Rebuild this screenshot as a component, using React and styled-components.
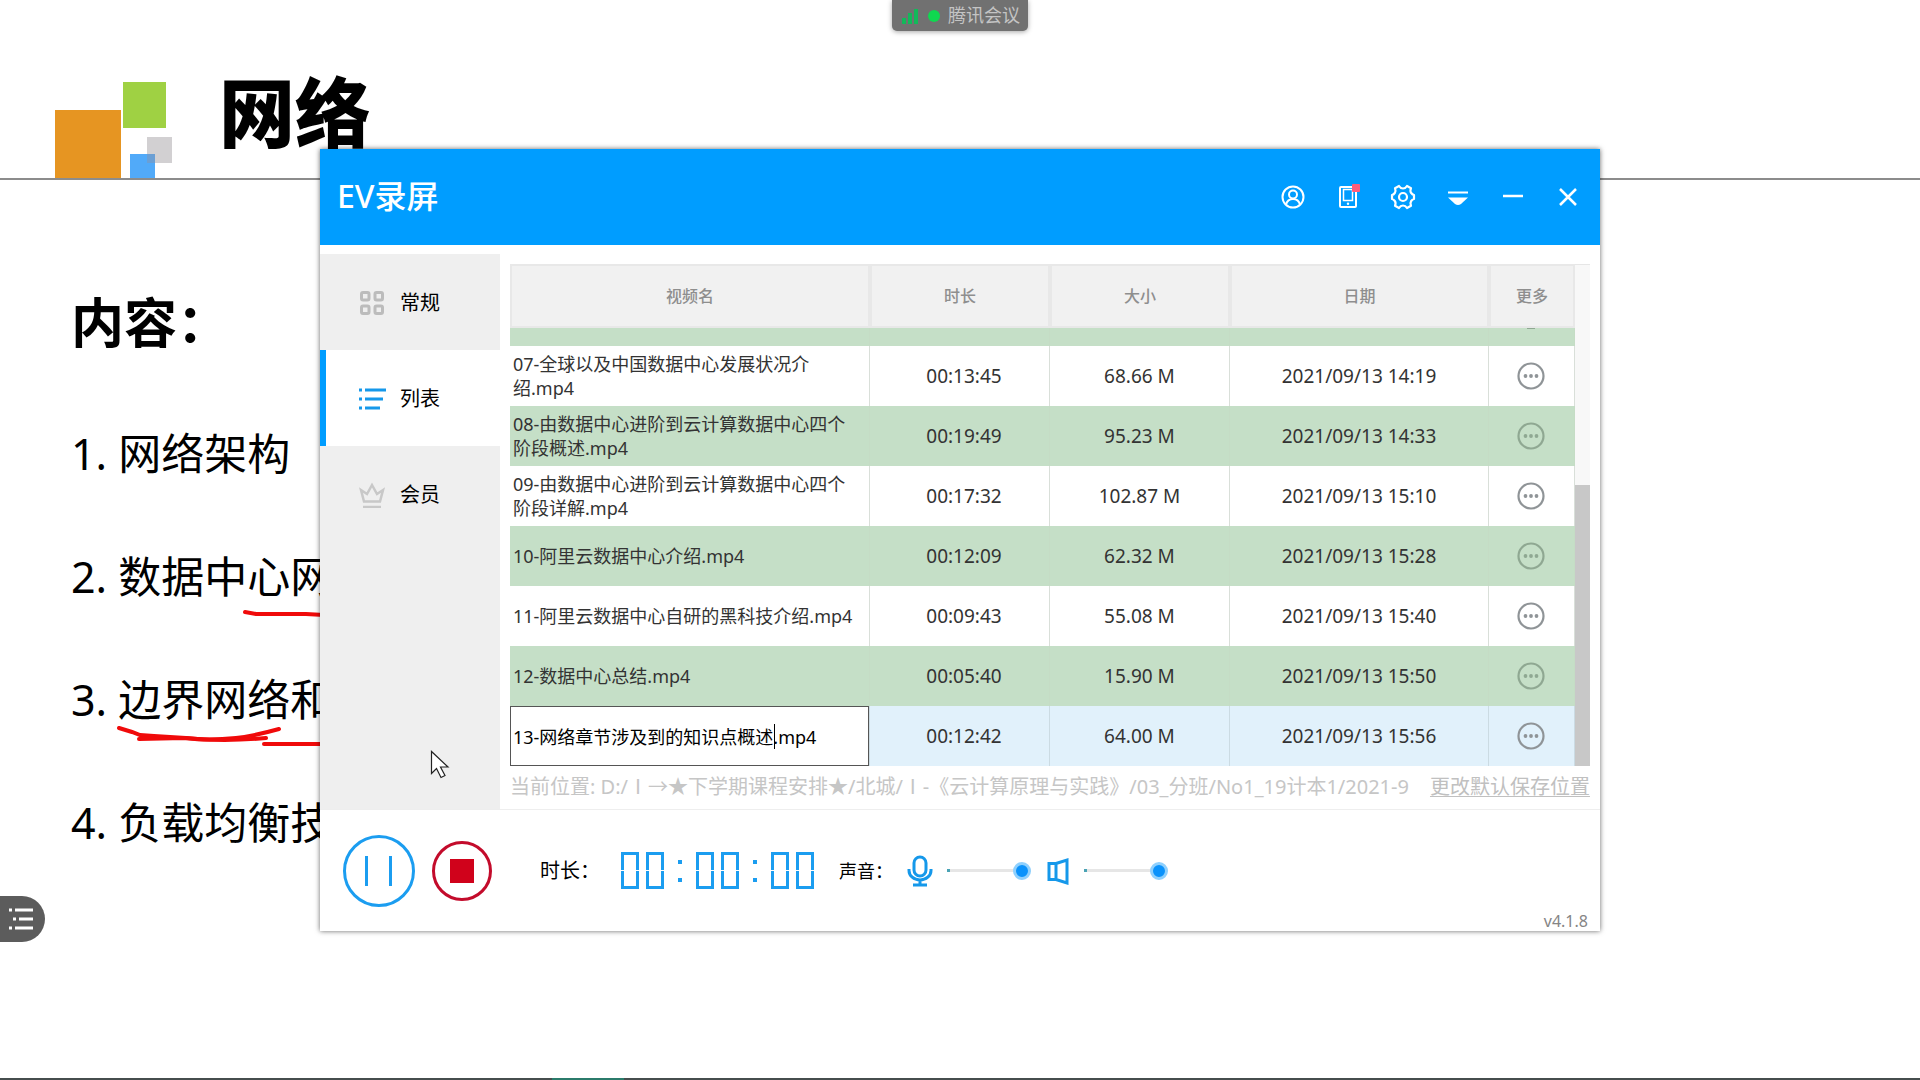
import React, { useState } from "react";
import styled, { createGlobalStyle, css } from "styled-components";

const GlobalStyle = createGlobalStyle`
  * {
    box-sizing: border-box;
  }
  body {
    margin: 0;
    background: #fff;
    font-family: "Noto Sans", "Noto Sans CJK SC", sans-serif;
    color: #000;
  }
  button {
    padding: 0;
    border: 0;
    background: none;
    font: inherit;
    color: inherit;
  }
  h1, h2, p, ol {
    margin: 0;
    padding: 0;
  }
  svg {
    display: block;
    flex: none;
  }
`;

const Desktop = styled.div`
  position: relative;
  min-height: 100vh;
  overflow: hidden;
`;

/* slide */
const SlideHeader = styled.header`
  display: flex;
  align-items: flex-end;
  height: 180px;
  padding-left: 55px;
  border-bottom: 2px solid #8c8c8c;
`;
const SlideTitle = styled.h1`
  margin-left: 46px;
  font-family: "Noto Sans CJK SC", sans-serif;
  font-size: 76px;
  line-height: 138px;
  font-weight: 900;
`;
const SlideBody = styled.div`
  padding: 100px 71px 0;
  white-space: nowrap;
`;
const Subtitle = styled.h2`
  font-family: "Noto Sans CJK SC", sans-serif;
  font-size: 53px;
  line-height: 80px;
  font-weight: 700;
`;
const Topics = styled.ol`
  margin-top: 32px;
  list-style: none;
`;
const Topic = styled.li`
  font-size: 43px;
  line-height: 123px;
`;
const Ink = styled.svg`
  position: absolute;
  left: 0;
  top: 600px;
`;

const MeetingPill = styled.div`
  position: absolute;
  top: 0;
  left: 50%;
  transform: translateX(-50%);
  display: flex;
  align-items: center;
  gap: 8px;
  height: 31px;
  padding: 0 8px 0 10px;
  border-radius: 0 0 5px 5px;
  background: #717171;
  box-shadow: 0 1px 5px rgba(0, 0, 0, 0.35);
  color: #c4c4c4;
  font-size: 18px;
  line-height: 31px;
  white-space: nowrap;
`;
const SideToggle = styled.button`
  position: absolute;
  left: 0;
  top: 896px;
  width: 45px;
  height: 46px;
  padding-left: 8px;
  border-radius: 0 23px 23px 0;
  background: #5c5c5c;
`;
const TaskEdge = styled.div`
  position: absolute;
  left: 0;
  right: 0;
  bottom: 0;
  height: 2px;
  padding-left: 552px;
  background: #464e4e;
  &::before {
    content: "";
    display: block;
    width: 72px;
    height: 2px;
    background: #2b7b6b;
  }
`;
const Pointer = styled.svg`
  position: absolute;
  left: 430px;
  top: 750px;
`;

/* recorder window */
const Recorder = styled.section`
  position: absolute;
  top: 149px;
  left: calc(100% / 6);
  width: calc(100% * 2 / 3);
  background: #fff;
  box-shadow: 0 0 5px rgba(0, 0, 0, 0.6);
`;
const TitleBar = styled.header`
  display: flex;
  align-items: center;
  justify-content: space-between;
  height: 96px;
  padding: 0 18px 0 17px;
  background: #009dff;
  color: #fff;
`;
const AppName = styled.h2`
  padding-bottom: 2px;
  font-size: 32px;
  line-height: 48px;
  font-weight: 500;
`;
const WindowTools = styled.div`
  display: flex;
  gap: 27px;
`;
const ToolButton = styled.button`
  width: 28px;
  height: 28px;
`;
const Body = styled.div`
  display: flex;
  border-bottom: 1px solid #eee;
`;
const Sidebar = styled.nav`
  flex: none;
  width: 180px;
  margin-top: 9px;
  background: #efefef;
`;
const Tab = styled.button`
  display: flex;
  align-items: center;
  gap: 13px;
  width: 100%;
  height: 96px;
  padding: 2px 0 0 33px;
  border-left: 6px solid transparent;
  font-size: 20px;
  line-height: 30px;
  ${({ $active }) =>
    $active &&
    css`
      background: #fff;
      border-left-color: #009dff;
    `}
`;
const Main = styled.main`
  flex: 1;
  min-width: 0;
  padding: 19px 10px 0;
`;
const ListArea = styled.div`
  display: flex;
`;
const VideoTable = styled.table`
  flex: 1;
  min-width: 0;
  table-layout: fixed;
  border-collapse: separate;
  border-spacing: 0;
`;
const HeadCell = styled.th`
  width: ${({ $width }) => $width || "auto"};
  height: 64px;
  padding: 0;
  background: #f1f1f1;
  border: 2px solid #e8e8e8;
  color: #8e8e8e;
  font-size: 16px;
  line-height: 24px;
  font-weight: 500;
`;
const rowColors = { green: "#c5dfc7", white: "#fff", active: "#e1f1fb" };
const lineColors = { green: "#c5dcc5", white: "#d9dfd9", active: "#cbdbe3" };
const Row = styled.tr`
  height: ${({ $clipped }) => ($clipped ? "18px" : "60px")};
  background: ${({ $tone }) => rowColors[$tone]};
  td {
    border-right-color: ${({ $tone }) => lineColors[$tone]};
  }
`;
const Cell = styled.td`
  padding: 0;
  border-right: 1px solid;
  color: #333;
  font-size: 19px;
  line-height: 28px;
  text-align: center;
`;
const NameCell = styled(Cell)`
  padding: 0 10px 0 3px;
  font-size: 18px;
  line-height: 24px;
  text-align: left;
`;
const TimeCell = styled(Cell)`
  padding-left: 9px;
`;
const EditCell = styled(Cell)`
  position: relative;
`;
const NameInput = styled.input`
  display: block;
  width: 100%;
  height: 60px;
  padding: 0 2px;
  border: 1px solid #555;
  border-radius: 0;
  outline: 0;
  background: #fff;
  color: #000;
  font: inherit;
  font-size: 18px;
`;
const Caret = styled.span`
  position: absolute;
  left: 264px;
  top: 18px;
  width: 1px;
  height: 25px;
  background: #000;
`;
const MoreButton = styled.button`
  display: block;
  width: 28px;
  height: 28px;
  margin: 0 auto;
  color: ${({ $tone }) => ($tone === "green" ? "#8fa892" : "#8f9497")};
`;
const ClippedMore = styled.div`
  width: 8px;
  height: 1px;
  margin: 0 auto 17px;
  background: #8fa892;
`;
const ScrollTrack = styled.div`
  display: flex;
  align-items: flex-end;
  flex: none;
  width: 15px;
  background: #f8f8f8;
  border-top: 1px solid #e6e6e6;
`;
const ScrollThumb = styled.div`
  width: 100%;
  height: 56%;
  background: #c8c8c8;
`;
const Location = styled.div`
  display: flex;
  justify-content: space-between;
  gap: 8px;
  height: 43px;
  color: #c6c6c6;
  font-size: 20px;
  line-height: 42px;
  white-space: nowrap;
  span {
    flex: 1;
    min-width: 0;
    overflow: hidden;
  }
  a {
    color: #c0c0c0;
    text-underline-offset: 2px;
    text-decoration-thickness: 1px;
  }
`;

/* bottom controls */
const Controls = styled.footer`
  display: flex;
  align-items: center;
  height: 121px;
  padding-left: 23px;
  padding-right: 12px;
`;
const RoundButton = styled.button`
  display: flex;
  align-items: center;
  justify-content: center;
  flex: none;
  width: ${({ $size }) => $size};
  height: ${({ $size }) => $size};
  border: 3px solid ${({ $color }) => $color};
  border-radius: 50%;
  & + & {
    margin-left: 17px;
  }
`;
const PauseBars = styled.i`
  width: 27px;
  height: 30px;
  border: solid #1b9df0;
  border-width: 0 3px;
`;
const StopSquare = styled.i`
  width: 24px;
  height: 24px;
  background: #d0021b;
`;
const TimeLabel = styled.span`
  flex: none;
  width: 129px;
  padding-left: 48px;
  font-size: 20px;
  line-height: 30px;
`;
const SoundLabel = styled.span`
  flex: none;
  width: 68px;
  font-size: 18px;
  line-height: 30px;
`;
const Timer = styled.div`
  display: flex;
  align-items: center;
  gap: 7px;
  margin-right: 25px;
`;
const Digit = styled.span`
  display: flex;
  flex-direction: column;
  gap: 1px;
  width: 18px;
  height: 37px;
  &::before,
  &::after {
    content: "";
    flex: 1;
    border: 3px solid #1b9df0;
  }
  &::before {
    border-bottom: 0;
  }
  &::after {
    border-top: 0;
  }
`;
const Colon = styled.span`
  width: 18px;
  height: 22px;
  padding: 0 7px;
  &::before,
  &::after {
    content: "";
    display: block;
    width: 4px;
    height: 4px;
    background: #1b9df0;
  }
  &::after {
    margin-top: 14px;
  }
`;
const Volume = styled.label`
  display: flex;
  align-items: center;
  gap: 14px;
  margin-right: 15px;
`;
const Slider = styled.input`
  appearance: none;
  width: 84px;
  height: 18px;
  margin: 0;
  background: linear-gradient(#4aa3b5, #4aa3b5) 0 50% / 3px 3px no-repeat,
    linear-gradient(#e6e6e6, #e6e6e6) 0 50% / 100% 3px no-repeat;
  &::-webkit-slider-thumb {
    appearance: none;
    width: 18px;
    height: 18px;
    border: 3px solid #8fd0fd;
    border-radius: 50%;
    background: #0a92fb;
  }
`;
const Version = styled.span`
  align-self: flex-end;
  margin-left: auto;
  color: #858585;
  font-size: 16px;
  line-height: 20px;
`;

const videos = [
  ["07-全球以及中国数据中心发展状况介绍.mp4", "00:13:45", "68.66 M", "2021/09/13 14:19"],
  ["08-由数据中心进阶到云计算数据中心四个阶段概述.mp4", "00:19:49", "95.23 M", "2021/09/13 14:33"],
  ["09-由数据中心进阶到云计算数据中心四个阶段详解.mp4", "00:17:32", "102.87 M", "2021/09/13 15:10"],
  ["10-阿里云数据中心介绍.mp4", "00:12:09", "62.32 M", "2021/09/13 15:28"],
  ["11-阿里云数据中心自研的黑科技介绍.mp4", "00:09:43", "55.08 M", "2021/09/13 15:40"],
  ["12-数据中心总结.mp4", "00:05:40", "15.90 M", "2021/09/13 15:50"],
];

const tools = [
  {
    name: "账号",
    icon: (
      <g strokeWidth="2">
        <circle cx="14" cy="14" r="10.5" />
        <circle cx="14" cy="11.5" r="4" />
        <path d="M7 21.5c1-3.5 3.5-5.5 7-5.5s6 2 7 5.5" />
      </g>
    ),
  },
  {
    name: "手机",
    icon: (
      <g strokeWidth="2">
        <rect x="6" y="4" width="16" height="20" rx="1" />
        <path d="M9.5 6.500h9v11h-9z" strokeWidth="1.500" />
        <circle cx="14" cy="20.800" r="1.200" fill="currentColor" stroke="none" />
        <rect x="18" y="1" width="8" height="8" rx="1" fill="#ff5c7c" stroke="none" />
      </g>
    ),
  },
  {
    name: "设置",
    icon: (
      <g strokeWidth="2.200" strokeLinejoin="round">
        <path d="M10 3q1.500 2.500 4 2.500T18 3l4 2.200q-1.200 3 .2 4.800T25 12v4q-1.500.2-2.800 2t-.2 4.800L18 25q-1.500-2.500-4-2.500T10 25l-4-2.200q1.200-3-.2-4.800T3 16v-4q1.500-.2 2.800-2T6 5.200z" />
        <circle cx="14" cy="14" r="4" />
      </g>
    ),
  },
  {
    name: "菜单",
    icon: (
      <g>
        <path d="M4 9.500h20" strokeWidth="2" />
        <path d="M4 14.500h20l-7 6.500q-3 2-6 0z" fill="currentColor" stroke="none" />
      </g>
    ),
  },
  { name: "最小化", icon: <path d="M4 13h20" strokeWidth="2.500" /> },
  { name: "关闭", icon: <path d="M6 6l16 16M22 6L6 22" strokeWidth="2.500" /> },
];

const tabs = [
  {
    name: "常规",
    icon: (
      <g fill="none" stroke="#bcbcbc" strokeWidth="3">
        <rect x="2.500" y="2.500" width="7.500" height="7.500" rx="1.500" />
        <rect x="16" y="2.500" width="7.500" height="7.500" rx="1.500" />
        <rect x="2.500" y="16" width="7.500" height="7.500" rx="1.500" />
        <rect x="16" y="16" width="7.500" height="7.500" rx="1.500" />
      </g>
    ),
  },
  {
    name: "列表",
    icon: (
      <g stroke="#1598ea" strokeWidth="3">
        <path d="M0 4h3M6 4h21M0 13h3M6 13h18M0 22h3M6 22h15" />
      </g>
    ),
  },
  {
    name: "会员",
    icon: (
      <g fill="none" stroke="#c8c8c8" strokeWidth="2.500">
        <path d="M5 19.500L2 8l6 4 5-9 5 9 6-4-3 11.500z" />
        <path d="M4 25h18" />
      </g>
    ),
  },
];

function More({ tone }) {
  return (
    <MoreButton type="button" $tone={tone} aria-label="更多">
      <svg width="28" height="28" viewBox="0 0 28 28" fill="currentColor">
        <circle cx="14" cy="14" r="12.500" fill="none" stroke="currentColor" strokeWidth="2.200" />
        <circle cx="8.500" cy="14" r="1.900" />
        <circle cx="14" cy="14" r="1.900" />
        <circle cx="19.500" cy="14" r="1.900" />
      </svg>
    </MoreButton>
  );
}

function VideoList() {
  const [name, setName] = useState("13-网络章节涉及到的知识点概述.mp4");
  return (
    <ListArea>
      <VideoTable>
        <thead>
          <tr>
            <HeadCell>视频名</HeadCell>
            <HeadCell $width="180px">时长</HeadCell>
            <HeadCell $width="180px">大小</HeadCell>
            <HeadCell $width="259px">日期</HeadCell>
            <HeadCell $width="86px">更多</HeadCell>
          </tr>
        </thead>
        <tbody>
          <Row $tone="green" $clipped>
            <Cell />
            <Cell />
            <Cell />
            <Cell />
            <Cell>
              <ClippedMore />
            </Cell>
          </Row>
          {videos.map(([title, time, size, date], i) => {
            const tone = i % 2 ? "green" : "white";
            return (
              <Row key={title} $tone={tone}>
                <NameCell>{title}</NameCell>
                <TimeCell>{time}</TimeCell>
                <Cell>{size}</Cell>
                <Cell>{date}</Cell>
                <Cell>
                  <More tone={tone} />
                </Cell>
              </Row>
            );
          })}
          <Row $tone="active">
            <EditCell>
              <NameInput aria-label="视频名" value={name} onChange={(e) => setName(e.target.value)} />
              <Caret />
            </EditCell>
            <TimeCell>00:12:42</TimeCell>
            <Cell>64.00 M</Cell>
            <Cell>2021/09/13 15:56</Cell>
            <Cell>
              <More tone="active" />
            </Cell>
          </Row>
        </tbody>
      </VideoTable>
      <ScrollTrack>
        <ScrollThumb />
      </ScrollTrack>
    </ListArea>
  );
}

function ControlBar() {
  return (
    <Controls>
      <RoundButton type="button" $size="72px" $color="#1b9df0" aria-label="暂停">
        <PauseBars />
      </RoundButton>
      <RoundButton type="button" $size="60px" $color="#c30b2b" aria-label="停止">
        <StopSquare />
      </RoundButton>
      <TimeLabel>时长：</TimeLabel>
      <Timer role="timer" aria-label="00:00:00">
        <Digit />
        <Digit />
        <Colon />
        <Digit />
        <Digit />
        <Colon />
        <Digit />
        <Digit />
      </Timer>
      <SoundLabel>声音：</SoundLabel>
      <Volume>
        <svg width="26" height="32" viewBox="0 0 26 32" fill="none" stroke="#1598ea" strokeWidth="3">
          <rect x="7" y="2" width="12" height="19" rx="6" />
          <path d="M2 14v1.500a11 9.500 0 0 0 22 0V14M13 25v5M6 30h14" />
        </svg>
        <Slider type="range" aria-label="麦克风" defaultValue="100" />
      </Volume>
      <Volume>
        <svg width="24" height="28" viewBox="0 0 24 28" fill="none" stroke="#1598ea" strokeWidth="3">
          <path d="M3 6.500h7v16H3zM10 6.500l11-3.500v23l-11-3.500" />
        </svg>
        <Slider type="range" aria-label="扬声器" defaultValue="100" />
      </Volume>
      <Version>v4.1.8</Version>
    </Controls>
  );
}

export default function App() {
  const [active, setActive] = useState("列表");
  return (
    <Desktop>
      <GlobalStyle />
      <SlideHeader>
        <svg width="118" height="96" viewBox="0 0 118 96">
          <rect y="28" width="66" height="68" fill="#e69522" />
          <rect x="68" width="43" height="46" fill="#9fd143" />
          <rect x="92" y="55" width="25" height="26" fill="#d2d0d2" />
          <rect x="75" y="72" width="25" height="24" fill="#51aaf9" />
          <rect x="92" y="72" width="8" height="9" fill="#6b9fd4" />
        </svg>
        <SlideTitle>网络</SlideTitle>
      </SlideHeader>
      <SlideBody>
        <Subtitle>内容：</Subtitle>
        <Topics>
          <Topic>1. 网络架构</Topic>
          <Topic>2. 数据中心网</Topic>
          <Topic>3. 边界网络和</Topic>
          <Topic>4. 负载均衡技</Topic>
        </Topics>
      </SlideBody>
      <Ink width="340" height="160" viewBox="0 600 340 160" fill="none" stroke="#f00a0a" strokeWidth="4" strokeLinecap="round">
        <path d="M245 612l11 2h50l18 1" />
        <path d="M119 728l13 4 8 3 14 1 32 2q22 3 50 0 18-2 43-9" />
        <path d="M139 739l45-1q40 4 82 0" />
        <path d="M264 744h60" />
      </Ink>
      <SideToggle type="button" aria-label="目录">
        <svg width="26" height="24" viewBox="0 0 26 24" stroke="#fff" strokeWidth="3">
          <path d="M1 3h3M7 3h18M5 12h3M11 12h14M1 21h3M7 21h18" />
        </svg>
      </SideToggle>
      <MeetingPill>
        <svg width="18" height="16" viewBox="0 0 18 16" fill="#12b85a">
          <rect y="10" width="4" height="6" />
          <rect x="6" y="5" width="4" height="11" />
          <rect x="12" y="1" width="4" height="15" />
        </svg>
        <svg width="12" height="12" viewBox="0 0 12 12">
          <circle cx="6" cy="6" r="6" fill="#0fd850" />
        </svg>
        腾讯会议
      </MeetingPill>

      <Recorder>
        <TitleBar>
          <AppName>EV录屏</AppName>
          <WindowTools>
            {tools.map((tool) => (
              <ToolButton key={tool.name} type="button" aria-label={tool.name}>
                <svg width="28" height="28" viewBox="0 0 28 28" fill="none" stroke="currentColor">
                  {tool.icon}
                </svg>
              </ToolButton>
            ))}
          </WindowTools>
        </TitleBar>
        <Body>
          <Sidebar>
            {tabs.map((tab) => (
              <Tab key={tab.name} type="button" $active={tab.name === active} onClick={() => setActive(tab.name)}>
                <svg width="28" height="26" viewBox="0 0 28 26">
                  {tab.icon}
                </svg>
                {tab.name}
              </Tab>
            ))}
          </Sidebar>
          <Main>
            <VideoList />
            <Location>
              <span>当前位置: D:/Ⅰ→★下学期课程安排★/北城/Ⅰ-《云计算原理与实践》/03_分班/No1_19计本1/2021-9</span>
              <a href="#location">更改默认保存位置</a>
            </Location>
          </Main>
        </Body>
        <ControlBar />
      </Recorder>

      <Pointer width="22" height="30" viewBox="0 0 22 30">
        <path d="M1.500 1.500v22l5-5 4.500 9 4-2-4.500-8.500h7.500z" fill="#fff" stroke="#222" strokeWidth="1.200" />
      </Pointer>
      <TaskEdge />
    </Desktop>
  );
}
